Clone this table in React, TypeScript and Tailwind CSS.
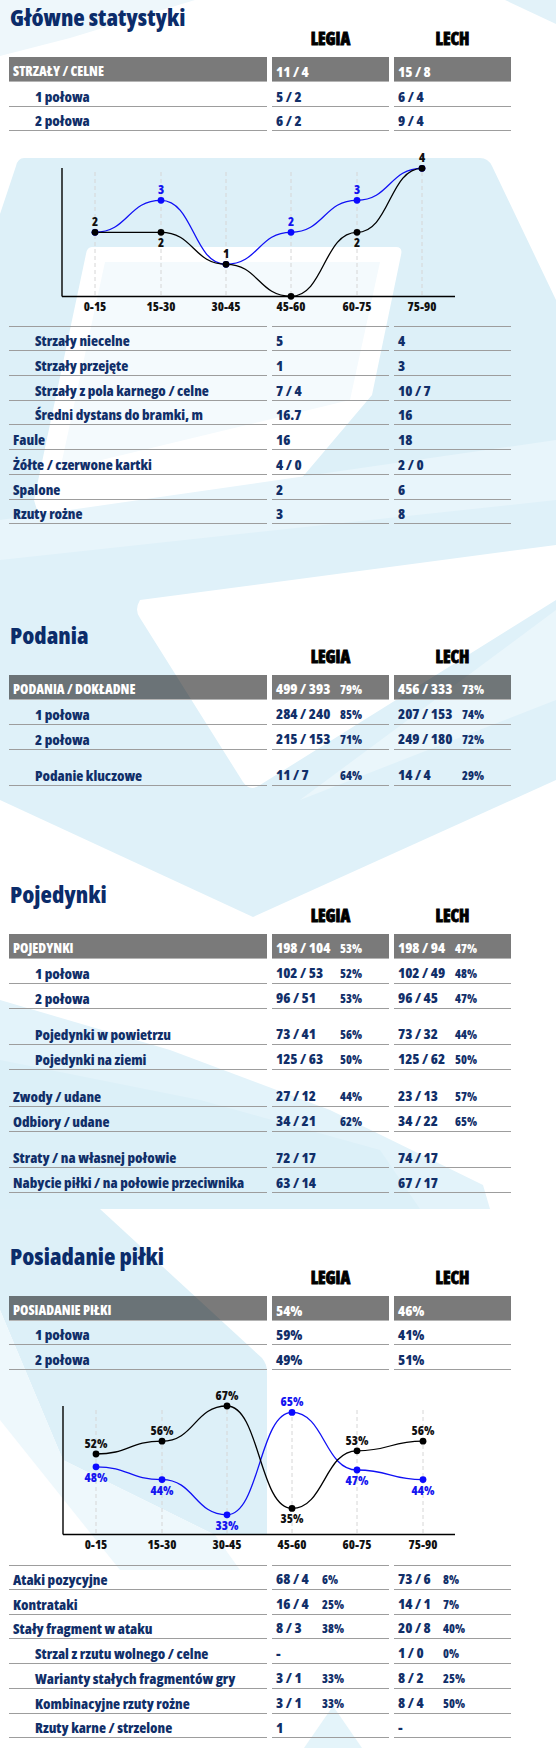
import React from 'react'

type Row = {
  label?: string
  sub?: boolean
  a?: string
  ap?: string
  b?: string
  bp?: string
  bar?: boolean
  gap?: boolean
  first?: boolean
}

const NAVY = 'text-[#112f69]'

// szerokosci kolumny wartosci (odstep do procentow)
type Widths = { a: string; b: string }

function ValueCell({ v, p, w, bar, first }: { v?: string; p?: string; w: string; bar?: boolean; first?: boolean }) {
  return (
    <div
      className={`flex items-end pl-[4px] pb-[1px] border-b ${first ? 'border-t' : ''} ${
        bar ? 'bg-black/[0.52] border-[#b4b4b4] text-white' : `border-[#9d9d9d] ${NAVY}`
      }`}
    >
      <div className="flex items-baseline whitespace-nowrap">
        <span className={`${w} shrink-0 text-[14.5px] leading-[17px] font-extrabold`}>{v}</span>
        {p && <span className="text-[12px] leading-[16px] font-extrabold">{p}</span>}
      </div>
    </div>
  )
}

function StatRow({ row, widths }: { row: Row; widths: Widths }) {
  if (row.gap) return <div className="h-[12px]" />
  return (
    <div className="grid grid-cols-[258px_117px_117px] gap-x-[5px] h-[24.75px]">
      <div
        className={`flex items-end pb-[1px] border-b ${row.first ? 'border-t' : ''} ${row.sub ? 'pl-[26px]' : 'pl-[4px]'} ${
          row.bar ? 'bg-black/[0.52] border-[#b4b4b4] text-white uppercase' : `border-[#9d9d9d] ${NAVY}`
        }`}
      >
        <span className={`${row.bar ? 'text-[13.5px]' : 'text-[14.5px]'} leading-[17px] font-extrabold whitespace-nowrap`}>{row.label}</span>
      </div>
      <ValueCell v={row.a} p={row.ap} w={widths.a} bar={row.bar} first={row.first} />
      <ValueCell v={row.b} p={row.bp} w={widths.b} bar={row.bar} first={row.first} />
    </div>
  )
}

function SectionHead({ title }: { title: string }) {
  return (
    <>
      <h2 className="h-[24px] pl-[1px] text-[23.5px] leading-[21px] font-extrabold text-[#0b2c6a] whitespace-nowrap">{title}</h2>
      <div className="grid grid-cols-[258px_117px_117px] gap-x-[5px] h-[26px]">
        <div />
        <div className="text-center text-[17px] leading-[16px] font-extrabold text-black [-webkit-text-stroke:0.8px_black]">LEGIA</div>
        <div className="text-center text-[17px] leading-[16px] font-extrabold text-black [-webkit-text-stroke:0.8px_black]">LECH</div>
      </div>
    </>
  )
}

function Table({ rows, widths }: { rows: Row[]; widths: Widths }) {
  return (
    <div>
      {rows.map((r, i) => (
        <StatRow key={i} row={r} widths={widths} />
      ))}
    </div>
  )
}

type Lbl = { text: string; pos: 'above' | 'below' }

function curve(xs: number[], ys: number[]) {
  let d = `M${xs[0]} ${ys[0]}`
  for (let i = 1; i < xs.length; i++) {
    const mx = (xs[i] - xs[i - 1]) / 2
    d += ` C${xs[i - 1] + mx} ${ys[i - 1]} ${xs[i] - mx} ${ys[i]} ${xs[i]} ${ys[i]}`
  }
  return d
}

function Chart({
  xs,
  axisLeft,
  top,
  base,
  blue,
  black,
  blueLabels,
  blackLabels,
}: {
  xs: number[]
  axisLeft: number
  top: number
  base: number
  blue: number[]
  black: number[]
  blueLabels: (Lbl | null)[]
  blackLabels: (Lbl | null)[]
}) {
  const cats = ['0-15', '15-30', '30-45', '45-60', '60-75', '75-90']
  const renderLabels = (ys: number[], labels: (Lbl | null)[], color: string) =>
    labels.map((l, i) =>
      l ? (
        <text
          key={i}
          x={xs[i]}
          y={l.pos === 'above' ? ys[i] - 6 : ys[i] + 15}
          textAnchor="middle"
          fontSize="12.5"
          fontWeight="800"
          fill={color}
        >
          {l.text}
        </text>
      ) : null
    )
  return (
    <svg width="556" height="195" viewBox="0 0 556 195" className="block">
      {xs.map((x) => (
        <line key={x} x1={x} x2={x} y1={top + 4} y2={base} stroke="#d6d6d6" strokeWidth="1" strokeDasharray="4 3" />
      ))}
      <line x1={axisLeft} x2={axisLeft} y1={top} y2={base} stroke="#000" strokeWidth="1.4" />
      <line x1={axisLeft} x2={455} y1={base} y2={base} stroke="#000" strokeWidth="1.4" />
      <path d={curve(xs, blue)} fill="none" stroke="#1010f5" strokeWidth="1.3" />
      <path d={curve(xs, black)} fill="none" stroke="#000" strokeWidth="1.3" />
      {blue.map((y, i) => (
        <circle key={'b' + i} cx={xs[i]} cy={y} r="3.4" fill="#0a0aff" />
      ))}
      {black.map((y, i) => (
        <circle key={'k' + i} cx={xs[i]} cy={y} r="3.4" fill="#000" />
      ))}
      {renderLabels(blue, blueLabels, '#1414f0')}
      {renderLabels(black, blackLabels, '#111')}
      {cats.map((c, i) => (
        <text key={c} x={xs[i]} y={base + 14} textAnchor="middle" fontSize="12.5" fontWeight="800" fill="#111">
          {c}
        </text>
      ))}
    </svg>
  )
}

function Background() {
  return (
    <svg className="absolute inset-0" width="556" height="1748" viewBox="0 0 556 1748">
      <path d="M0 0 H195 L70 38 L0 56 Z" fill="#eef7fb" />
      <path d="M505 0 H556 V24 Z" fill="#e2f2f9" />
      {/* pas za wykresem */}
      <path d="M24 158 H480 Q488 158 492 166 L556 300 V540 L0 540 V214 L16 166 Q18 158 24 158 Z" fill="#ddf0f8" />
      <path d="M92 247 H396 Q403 247 401 255 L372 395 L300 480 L40 520 L34 500 L86 254 Q87 247 92 247 Z" fill="#ffffff" />
      <path d="M105 262 H380 L350 400 L60 470 Z" fill="#f4fafd" />
      <path d="M0 520 L556 440 V520 L0 600 Z" fill="#e8f5fb" />
      {/* podania */}
      <path d="M0 560 L556 500 V780 L253 917 L0 800 Z" fill="#dff1f9" />
      <path d="M140 600 Q134 610 140 618 L243 782 Q250 792 260 785 L556 600 V545 Z" fill="#ffffff" />
      <path d="M556 610 L556 700 L300 800 Z" fill="#eaf6fb" />
      {/* zwody / straty */}
      <path d="M0 1000 L170 1050 L330 1110 L483 1185 L490 1209 L0 1209 Z" fill="#e3f3fa" />
      <path d="M0 1060 L200 1100 L380 1150 L420 1209 L0 1209 Z" fill="#dcf0f8" />
      {/* posiadanie */}
      <path d="M0 1209 L100 1209 L262 1358 Q267 1364 267 1372 L267 1535 L215 1535 L63 1460 L0 1310 Z" fill="#ddf0f8" />
      <path d="M0 1310 L63 1460 L215 1535 L240 1570 L120 1570 L0 1420 Z" fill="#eef8fc" />
      <path d="M333 1706 L362 1748 L304 1748 Z" fill="#e4f4fa" />
    </svg>
  )
}

export default function App() {
  const s1a: Row[] = [
    { label: 'Strzały / celne', a: '11 / 4', b: '15 / 8', bar: true },
    { label: '1 połowa', sub: true, a: '5 / 2', b: '6 / 4' },
    { label: '2 połowa', sub: true, a: '6 / 2', b: '9 / 4' },
  ]
  const s1b: Row[] = [
    { label: 'Strzały niecelne', sub: true, a: '5', b: '4', first: true },
    { label: 'Strzały przejęte', sub: true, a: '1', b: '3' },
    { label: 'Strzały z pola karnego / celne', sub: true, a: '7 / 4', b: '10 / 7' },
    { label: 'Średni dystans do bramki, m', sub: true, a: '16.7', b: '16' },
    { label: 'Faule', a: '16', b: '18' },
    { label: 'Żółte / czerwone kartki', a: '4 / 0', b: '2 / 0' },
    { label: 'Spalone', a: '2', b: '6' },
    { label: 'Rzuty rożne', a: '3', b: '8' },
  ]
  const s2: Row[] = [
    { label: 'Podania / dokładne', a: '499 / 393', ap: '79%', b: '456 / 333', bp: '73%', bar: true },
    { label: '1 połowa', sub: true, a: '284 / 240', ap: '85%', b: '207 / 153', bp: '74%' },
    { label: '2 połowa', sub: true, a: '215 / 153', ap: '71%', b: '249 / 180', bp: '72%' },
    { gap: true },
    { label: 'Podanie kluczowe', sub: true, a: '11 / 7', ap: '64%', b: '14 / 4', bp: '29%' },
  ]
  const s3: Row[] = [
    { label: 'Pojedynki', a: '198 / 104', ap: '53%', b: '198 / 94', bp: '47%', bar: true },
    { label: '1 połowa', sub: true, a: '102 / 53', ap: '52%', b: '102 / 49', bp: '48%' },
    { label: '2 połowa', sub: true, a: '96 / 51', ap: '53%', b: '96 / 45', bp: '47%' },
    { gap: true },
    { label: 'Pojedynki w powietrzu', sub: true, a: '73 / 41', ap: '56%', b: '73 / 32', bp: '44%' },
    { label: 'Pojedynki na ziemi', sub: true, a: '125 / 63', ap: '50%', b: '125 / 62', bp: '50%' },
    { gap: true },
    { label: 'Zwody / udane', a: '27 / 12', ap: '44%', b: '23 / 13', bp: '57%' },
    { label: 'Odbiory / udane', a: '34 / 21', ap: '62%', b: '34 / 22', bp: '65%' },
    { gap: true },
    { label: 'Straty / na własnej połowie', a: '72 / 17', b: '74 / 17' },
    { label: 'Nabycie piłki / na połowie przeciwnika', a: '63 / 14', b: '67 / 17' },
  ]
  const s4a: Row[] = [
    { label: 'Posiadanie piłki', a: '54%', b: '46%', bar: true },
    { label: '1 połowa', sub: true, a: '59%', b: '41%' },
    { label: '2 połowa', sub: true, a: '49%', b: '51%' },
  ]
  const s4b: Row[] = [
    { label: 'Ataki pozycyjne', a: '68 / 4', ap: '6%', b: '73 / 6', bp: '8%', first: true },
    { label: 'Kontrataki', a: '16 / 4', ap: '25%', b: '14 / 1', bp: '7%' },
    { label: 'Stały fragment w ataku', a: '8 / 3', ap: '38%', b: '20 / 8', bp: '40%' },
    { label: 'Strzal z rzutu wolnego / celne', sub: true, a: '-', b: '1 / 0', bp: '0%' },
    { label: 'Warianty stałych fragmentów gry', sub: true, a: '3 / 1', ap: '33%', b: '8 / 2', bp: '25%' },
    { label: 'Kombinacyjne rzuty rożne', sub: true, a: '3 / 1', ap: '33%', b: '8 / 4', bp: '50%' },
    { label: 'Rzuty karne / strzelone', sub: true, a: '1', b: '-' },
  ]

  // wykres strzalow
  const x1 = [95, 161, 226, 291, 357, 422]
  const y1 = (v: number) => 165.3 - 32 * v
  // wykres posiadania
  const x2 = [96, 162, 227, 292, 357, 423]
  const y2 = (v: number) => 36 + (67 - v) * 3.2

  const A = (t: string): Lbl => ({ text: t, pos: 'above' })
  const B = (t: string): Lbl => ({ text: t, pos: 'below' })

  return (
    <div className="relative w-[556px] h-[1748px] overflow-hidden bg-white font-['Open_Sans','DejaVu_Sans_Condensed',sans-serif] font-stretch-condensed">
      <Background />
      <div className="relative pl-[9px]">
        {/* Główne statystyki */}
        <div className="pt-[7px]">
          <SectionHead title="Główne statystyki" />
          <Table rows={s1a} widths={{ a: 'w-[64px]', b: 'w-[64px]' }} />
          <div className="-ml-[9px]">
            <Chart
              xs={x1}
              axisLeft={62}
              top={37}
              base={165.5}
              blue={[2, 3, 1, 2, 3, 4].map(y1)}
              black={[2, 2, 1, 0, 2, 4].map(y1)}
              blueLabels={[null, A('3'), null, A('2'), A('3'), null]}
              blackLabels={[A('2'), B('2'), A('1'), null, B('2'), A('4')]}
            />
          </div>
          <Table rows={s1b} widths={{ a: 'w-[64px]', b: 'w-[64px]' }} />
        </div>

        {/* Podania */}
        <div className="mt-[101px]">
          <SectionHead title="Podania" />
          <Table rows={s2} widths={{ a: 'w-[64px]', b: 'w-[64px]' }} />
        </div>

        {/* Pojedynki */}
        <div className="mt-[98px]">
          <SectionHead title="Pojedynki" />
          <Table rows={s3} widths={{ a: 'w-[64px]', b: 'w-[57px]' }} />
        </div>

        {/* Posiadanie piłki */}
        <div className="mt-[52.75px]">
          <SectionHead title="Posiadanie piłki" />
          <Table rows={s4a} widths={{ a: 'w-[64px]', b: 'w-[64px]' }} />
          <div className="-ml-[9px]">
            <Chart
              xs={x2}
              axisLeft={63}
              top={36}
              base={164.5}
              blue={[48, 44, 33, 65, 47, 44].map(y2)}
              black={[52, 56, 67, 35, 53, 56].map(y2)}
              blueLabels={[B('48%'), B('44%'), B('33%'), A('65%'), B('47%'), B('44%')]}
              blackLabels={[A('52%'), A('56%'), A('67%'), B('35%'), A('53%'), A('56%')]}
            />
          </div>
          <Table rows={s4b} widths={{ a: 'w-[46px]', b: 'w-[45px]' }} />
        </div>
      </div>
    </div>
  )
}
